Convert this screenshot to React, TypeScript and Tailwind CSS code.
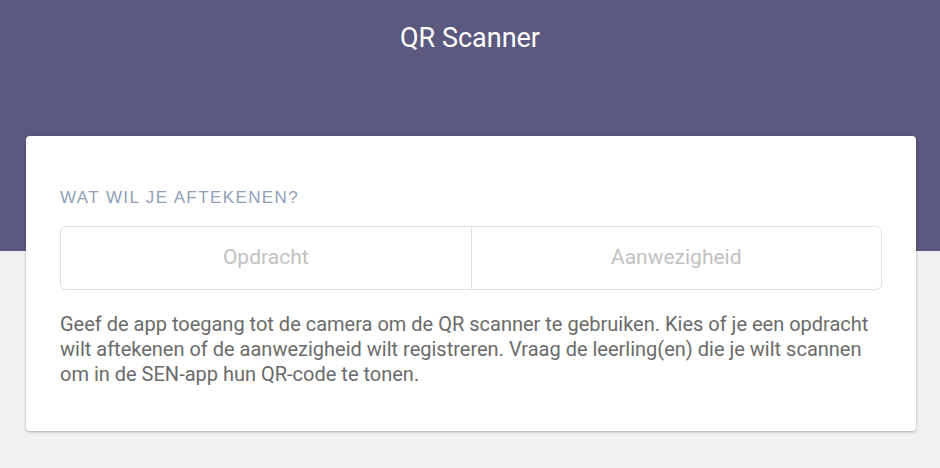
export default function App() {
  return (
    <div className="min-h-[468px] bg-[#f1f1f1] font-['Roboto',sans-serif]">
      <div className="h-[251px] bg-[#5c5980] flex justify-center pt-[19px]">
        <h1 className="text-[27px] leading-[38px] text-white font-normal">QR Scanner</h1>
      </div>
      <div className="-mt-[115px] pl-[26px] pr-[24px] pb-[37px]">
        <div className="bg-white rounded-[4px] shadow-[0_1px_3px_rgba(0,0,0,0.3)] px-[34px] pt-[50px] pb-[44px]">
          <h2 className="font-['Liberation_Sans',Arial,sans-serif] text-[17px] leading-[24px] tracking-[1.4px] text-[#8fa0b8]">WAT WIL JE AFTEKENEN?</h2>
          <div className="mt-[16px] flex h-[64px] border border-[#e0e0e0] rounded-[6px]">
            <button className="flex-1 text-[21px] text-[#c2c2c2]">Opdracht</button>
            <button className="flex-1 text-[21px] text-[#c2c2c2] border-l border-[#e0e0e0]">Aanwezigheid</button>
          </div>
          <p className="mt-[22px] text-[20px] leading-[25px] text-[#6b6b6b]">
            Geef de app toegang tot de camera om de QR scanner te gebruiken. Kies of je een opdracht wilt aftekenen of de aanwezigheid wilt registreren. Vraag de leerling(en) die je wilt scannen om in de SEN-app hun QR-code te tonen.
          </p>
        </div>
      </div>
    </div>
  );
}
